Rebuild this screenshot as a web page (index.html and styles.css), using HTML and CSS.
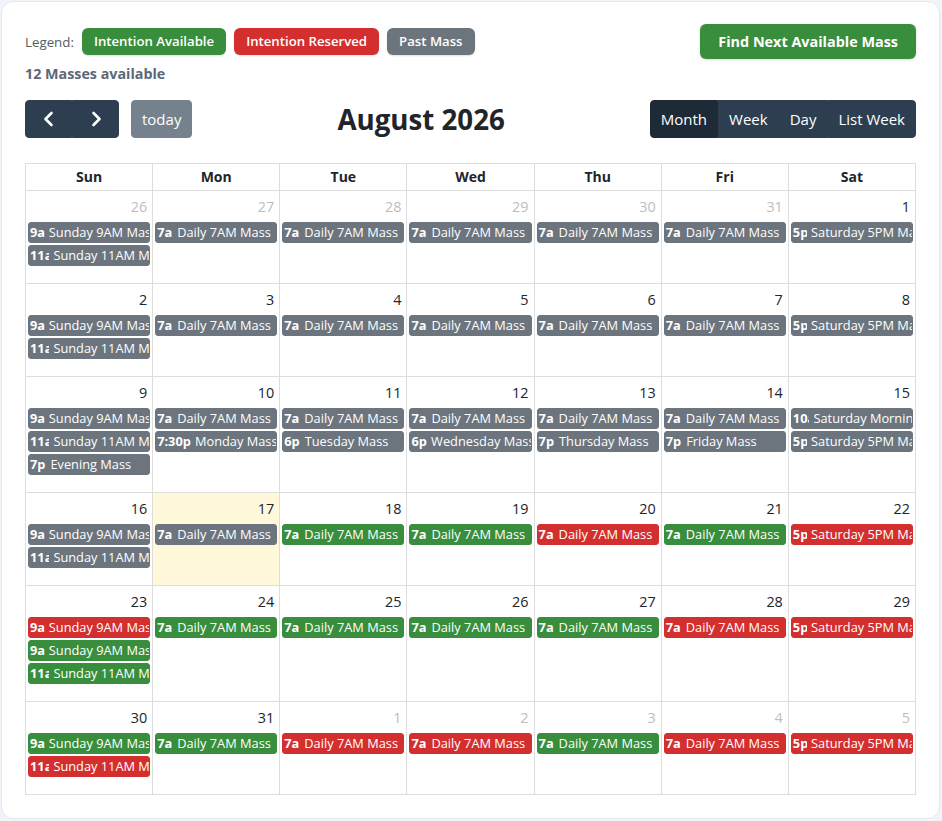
FILE: index.html
```html
<!DOCTYPE html>
<html lang="en">
<head>
<meta charset="utf-8">
<title>Mass Intentions Calendar</title>
<link rel="stylesheet" href="styles.css">
</head>
<body>
<div class="card">
  <div class="top">
    <div class="top-left">
      <div class="legend">
        <span class="legend-label">Legend:</span>
        <span class="badge green">Intention Available</span>
        <span class="badge red">Intention Reserved</span>
        <span class="badge gray">Past Mass</span>
      </div>
      <div class="count">12 Masses available</div>
    </div>
    <button class="find">Find Next Available Mass</button>
  </div>

  <div class="toolbar">
    <div class="tb-chunk">
      <div class="btn-group">
        <button class="fc-btn icon-btn" aria-label="prev"><svg width="24" height="24" viewBox="0 0 24 24"><path d="M14.5 6 L8.5 12 L14.5 18" fill="none" stroke="#fff" stroke-width="2.6" stroke-linecap="round" stroke-linejoin="round"/></svg></button>
        <button class="fc-btn icon-btn" aria-label="next"><svg width="24" height="24" viewBox="0 0 24 24"><path d="M9.5 6 L15.5 12 L9.5 18" fill="none" stroke="#fff" stroke-width="2.6" stroke-linecap="round" stroke-linejoin="round"/></svg></button>
      </div>
      <button class="fc-btn today" disabled>today</button>
    </div>
    <h2 class="title">August 2026</h2>
    <div class="btn-group">
      <button class="fc-btn active">Month</button>
      <button class="fc-btn">Week</button>
      <button class="fc-btn">Day</button>
      <button class="fc-btn">List Week</button>
    </div>
  </div>

  <table class="cal">
    <thead>
      <tr><th>Sun</th><th>Mon</th><th>Tue</th><th>Wed</th><th>Thu</th><th>Fri</th><th>Sat</th></tr>
    </thead>
    <tbody>
      <tr>
        <td class="other"><div class="num">26</div><div class="events">
          <div class="ev past"><span class="t">9a</span><span class="tc"><span class="tt">Sunday 9AM Mass</span></span></div>
          <div class="ev past"><span class="t">11a</span><span class="tc"><span class="tt">Sunday 11AM Mass</span></span></div>
        </div></td>
        <td class="other"><div class="num">27</div><div class="events">
          <div class="ev past"><span class="t">7a</span><span class="tc"><span class="tt">Daily 7AM Mass</span></span></div>
        </div></td>
        <td class="other"><div class="num">28</div><div class="events">
          <div class="ev past"><span class="t">7a</span><span class="tc"><span class="tt">Daily 7AM Mass</span></span></div>
        </div></td>
        <td class="other"><div class="num">29</div><div class="events">
          <div class="ev past"><span class="t">7a</span><span class="tc"><span class="tt">Daily 7AM Mass</span></span></div>
        </div></td>
        <td class="other"><div class="num">30</div><div class="events">
          <div class="ev past"><span class="t">7a</span><span class="tc"><span class="tt">Daily 7AM Mass</span></span></div>
        </div></td>
        <td class="other"><div class="num">31</div><div class="events">
          <div class="ev past"><span class="t">7a</span><span class="tc"><span class="tt">Daily 7AM Mass</span></span></div>
        </div></td>
        <td><div class="num">1</div><div class="events">
          <div class="ev past"><span class="t">5p</span><span class="tc"><span class="tt">Saturday 5PM Mass</span></span></div>
        </div></td>
      </tr>
      <tr>
        <td><div class="num">2</div><div class="events">
          <div class="ev past"><span class="t">9a</span><span class="tc"><span class="tt">Sunday 9AM Mass</span></span></div>
          <div class="ev past"><span class="t">11a</span><span class="tc"><span class="tt">Sunday 11AM Mass</span></span></div>
        </div></td>
        <td><div class="num">3</div><div class="events">
          <div class="ev past"><span class="t">7a</span><span class="tc"><span class="tt">Daily 7AM Mass</span></span></div>
        </div></td>
        <td><div class="num">4</div><div class="events">
          <div class="ev past"><span class="t">7a</span><span class="tc"><span class="tt">Daily 7AM Mass</span></span></div>
        </div></td>
        <td><div class="num">5</div><div class="events">
          <div class="ev past"><span class="t">7a</span><span class="tc"><span class="tt">Daily 7AM Mass</span></span></div>
        </div></td>
        <td><div class="num">6</div><div class="events">
          <div class="ev past"><span class="t">7a</span><span class="tc"><span class="tt">Daily 7AM Mass</span></span></div>
        </div></td>
        <td><div class="num">7</div><div class="events">
          <div class="ev past"><span class="t">7a</span><span class="tc"><span class="tt">Daily 7AM Mass</span></span></div>
        </div></td>
        <td><div class="num">8</div><div class="events">
          <div class="ev past"><span class="t">5p</span><span class="tc"><span class="tt">Saturday 5PM Mass</span></span></div>
        </div></td>
      </tr>
      <tr>
        <td><div class="num">9</div><div class="events">
          <div class="ev past"><span class="t">9a</span><span class="tc"><span class="tt">Sunday 9AM Mass</span></span></div>
          <div class="ev past"><span class="t">11a</span><span class="tc"><span class="tt">Sunday 11AM Mass</span></span></div>
          <div class="ev past"><span class="t">7p</span><span class="tc"><span class="tt">Evening Mass</span></span></div>
        </div></td>
        <td><div class="num">10</div><div class="events">
          <div class="ev past"><span class="t">7a</span><span class="tc"><span class="tt">Daily 7AM Mass</span></span></div>
          <div class="ev past"><span class="t">7:30p</span><span class="tc"><span class="tt">Monday Mass</span></span></div>
        </div></td>
        <td><div class="num">11</div><div class="events">
          <div class="ev past"><span class="t">7a</span><span class="tc"><span class="tt">Daily 7AM Mass</span></span></div>
          <div class="ev past"><span class="t">6p</span><span class="tc"><span class="tt">Tuesday Mass</span></span></div>
        </div></td>
        <td><div class="num">12</div><div class="events">
          <div class="ev past"><span class="t">7a</span><span class="tc"><span class="tt">Daily 7AM Mass</span></span></div>
          <div class="ev past"><span class="t">6p</span><span class="tc"><span class="tt">Wednesday Mass</span></span></div>
        </div></td>
        <td><div class="num">13</div><div class="events">
          <div class="ev past"><span class="t">7a</span><span class="tc"><span class="tt">Daily 7AM Mass</span></span></div>
          <div class="ev past"><span class="t">7p</span><span class="tc"><span class="tt">Thursday Mass</span></span></div>
        </div></td>
        <td><div class="num">14</div><div class="events">
          <div class="ev past"><span class="t">7a</span><span class="tc"><span class="tt">Daily 7AM Mass</span></span></div>
          <div class="ev past"><span class="t">7p</span><span class="tc"><span class="tt">Friday Mass</span></span></div>
        </div></td>
        <td><div class="num">15</div><div class="events">
          <div class="ev past"><span class="t">10a</span><span class="tc"><span class="tt">Saturday Morning Mass</span></span></div>
          <div class="ev past"><span class="t">5p</span><span class="tc"><span class="tt">Saturday 5PM Mass</span></span></div>
        </div></td>
      </tr>
      <tr>
        <td><div class="num">16</div><div class="events">
          <div class="ev past"><span class="t">9a</span><span class="tc"><span class="tt">Sunday 9AM Mass</span></span></div>
          <div class="ev past"><span class="t">11a</span><span class="tc"><span class="tt">Sunday 11AM Mass</span></span></div>
        </div></td>
        <td class="today-cell"><div class="num">17</div><div class="events">
          <div class="ev past"><span class="t">7a</span><span class="tc"><span class="tt">Daily 7AM Mass</span></span></div>
        </div></td>
        <td><div class="num">18</div><div class="events">
          <div class="ev avail"><span class="t">7a</span><span class="tc"><span class="tt">Daily 7AM Mass</span></span></div>
        </div></td>
        <td><div class="num">19</div><div class="events">
          <div class="ev avail"><span class="t">7a</span><span class="tc"><span class="tt">Daily 7AM Mass</span></span></div>
        </div></td>
        <td><div class="num">20</div><div class="events">
          <div class="ev reserved"><span class="t">7a</span><span class="tc"><span class="tt">Daily 7AM Mass</span></span></div>
        </div></td>
        <td><div class="num">21</div><div class="events">
          <div class="ev avail"><span class="t">7a</span><span class="tc"><span class="tt">Daily 7AM Mass</span></span></div>
        </div></td>
        <td><div class="num">22</div><div class="events">
          <div class="ev reserved"><span class="t">5p</span><span class="tc"><span class="tt">Saturday 5PM Mass</span></span></div>
        </div></td>
      </tr>
      <tr>
        <td><div class="num">23</div><div class="events">
          <div class="ev reserved"><span class="t">9a</span><span class="tc"><span class="tt">Sunday 9AM Mass</span></span></div>
          <div class="ev avail"><span class="t">9a</span><span class="tc"><span class="tt">Sunday 9AM Mass</span></span></div>
          <div class="ev avail"><span class="t">11a</span><span class="tc"><span class="tt">Sunday 11AM Mass</span></span></div>
        </div></td>
        <td><div class="num">24</div><div class="events">
          <div class="ev avail"><span class="t">7a</span><span class="tc"><span class="tt">Daily 7AM Mass</span></span></div>
        </div></td>
        <td><div class="num">25</div><div class="events">
          <div class="ev avail"><span class="t">7a</span><span class="tc"><span class="tt">Daily 7AM Mass</span></span></div>
        </div></td>
        <td><div class="num">26</div><div class="events">
          <div class="ev avail"><span class="t">7a</span><span class="tc"><span class="tt">Daily 7AM Mass</span></span></div>
        </div></td>
        <td><div class="num">27</div><div class="events">
          <div class="ev avail"><span class="t">7a</span><span class="tc"><span class="tt">Daily 7AM Mass</span></span></div>
        </div></td>
        <td><div class="num">28</div><div class="events">
          <div class="ev reserved"><span class="t">7a</span><span class="tc"><span class="tt">Daily 7AM Mass</span></span></div>
        </div></td>
        <td><div class="num">29</div><div class="events">
          <div class="ev reserved"><span class="t">5p</span><span class="tc"><span class="tt">Saturday 5PM Mass</span></span></div>
        </div></td>
      </tr>
      <tr>
        <td><div class="num">30</div><div class="events">
          <div class="ev avail"><span class="t">9a</span><span class="tc"><span class="tt">Sunday 9AM Mass</span></span></div>
          <div class="ev reserved"><span class="t">11a</span><span class="tc"><span class="tt">Sunday 11AM Mass</span></span></div>
        </div></td>
        <td><div class="num">31</div><div class="events">
          <div class="ev avail"><span class="t">7a</span><span class="tc"><span class="tt">Daily 7AM Mass</span></span></div>
        </div></td>
        <td class="other"><div class="num">1</div><div class="events">
          <div class="ev reserved"><span class="t">7a</span><span class="tc"><span class="tt">Daily 7AM Mass</span></span></div>
        </div></td>
        <td class="other"><div class="num">2</div><div class="events">
          <div class="ev reserved"><span class="t">7a</span><span class="tc"><span class="tt">Daily 7AM Mass</span></span></div>
        </div></td>
        <td class="other"><div class="num">3</div><div class="events">
          <div class="ev avail"><span class="t">7a</span><span class="tc"><span class="tt">Daily 7AM Mass</span></span></div>
        </div></td>
        <td class="other"><div class="num">4</div><div class="events">
          <div class="ev reserved"><span class="t">7a</span><span class="tc"><span class="tt">Daily 7AM Mass</span></span></div>
        </div></td>
        <td class="other"><div class="num">5</div><div class="events">
          <div class="ev reserved"><span class="t">5p</span><span class="tc"><span class="tt">Saturday 5PM Mass</span></span></div>
        </div></td>
      </tr>
    </tbody>
  </table>
</div>
</body>
</html>
```

FILE: styles.css
```css
* { box-sizing: border-box; }

html, body {
  margin: 0;
}

body {
  padding: 1px 2px 2px 1px;
  background: #f1f5f9;
  font-family: "Open Sans", "Noto Sans", "Liberation Sans", sans-serif;
  color: #212529;
}

.card {
  background: #ffffff;
  border: 1px solid #e2e8f0;
  border-radius: 12px;
  padding: 22px 23px 23px 23px;
}

/* top area */
.top {
  display: flex;
  justify-content: space-between;
  align-items: flex-start;
}

.legend {
  display: flex;
  align-items: center;
  gap: 8px;
  margin-top: 4px;
}

.legend-label {
  font-size: 13.3px;
  color: #555c63;
  margin-right: 0;
}

.badge {
  display: inline-block;
  height: 27px;
  line-height: 27px;
  padding: 0 12px;
  border-radius: 6px;
  font-size: 13.2px;
  font-weight: 600;
  color: #ffffff;
  box-shadow: 0 1px 2px rgba(0, 0, 0, 0.12);
}

.badge.green { background: #388e3c; }
.badge.red { background: #d32f2f; }
.badge.gray { background: #6c757d; }

.count {
  margin-top: 9px;
  font-size: 14.3px;
  line-height: 20px;
  font-weight: 700;
  color: #5a6878;
}

.find {
  font-family: inherit;
  height: 35px;
  padding: 0 18px;
  border: none;
  border-radius: 6px;
  background: #388e3c;
  color: #ffffff;
  font-size: 14.4px;
  font-weight: 700;
  box-shadow: 0 1px 3px rgba(0, 0, 0, 0.15);
}

/* toolbar */
.toolbar {
  display: flex;
  justify-content: space-between;
  align-items: center;
  margin-top: 16px;
  margin-bottom: 25px;
}

.tb-chunk {
  display: flex;
  align-items: center;
}

.btn-group {
  display: flex;
}

.fc-btn {
  font-family: inherit;
  font-size: 15px;
  line-height: 24px;
  padding: 6px 10px;
  border: 1px solid #2c3e50;
  background: #2c3e50;
  color: #ffffff;
  border-radius: 0;
}

.btn-group .fc-btn:first-child {
  border-radius: 4px 0 0 4px;
}

.btn-group .fc-btn:last-child {
  border-radius: 0 4px 4px 0;
}

.fc-btn.active {
  background: #1e2b37;
  border-color: #1e2b37;
}

.icon-btn {
  width: 47px;
  display: flex;
  justify-content: center;
  align-items: center;
  padding: 6px 0;
}

.icon-btn svg {
  display: block;
}

.fc-btn.today {
  margin-left: 12px;
  border-radius: 4px;
  opacity: 0.65;
}

.title {
  margin: 0;
  font-size: 27.7px;
  font-weight: 700;
  line-height: 36px;
  color: #212529;
}

/* calendar table */
.cal {
  width: 100%;
  table-layout: fixed;
  border-collapse: collapse;
}

.cal th,
.cal td {
  border: 1px solid #dddddd;
  padding: 0;
}

.cal th {
  font-size: 14px;
  font-weight: 700;
  line-height: 22px;
  padding: 2px 4px;
  text-align: center;
}

.cal td {
  vertical-align: top;
}

.num {
  text-align: right;
  padding: 4px 5px 4px 4px;
  font-size: 14.4px;
  line-height: 23px;
}

.other .num {
  opacity: 0.3;
}

.today-cell {
  background: #fff8db;
}

.events {
  padding-bottom: 15px;
}

.ev {
  display: flex;
  margin: 0 2px 2px 2px;
  border: 1px solid;
  border-radius: 3px;
  font-size: 12.8px;
  line-height: 17px;
  color: #ffffff;
  white-space: nowrap;
  overflow: hidden;
}

.ev.past { background: #6c757d; border-color: #6c757d; }
.ev.avail { background: #388e3c; border-color: #388e3c; }
.ev.reserved { background: #d32f2f; border-color: #d32f2f; }

.ev .t {
  font-weight: 700;
  padding: 1px;
  margin-right: 3px;
  max-width: 100%;
  overflow: hidden;
}

.ev .tc {
  flex: 1 1 auto;
  min-width: 0;
}

.ev .tt {
  display: inline-block;
  vertical-align: top;
  max-width: 100%;
  overflow: hidden;
  padding: 1px;
}
```
